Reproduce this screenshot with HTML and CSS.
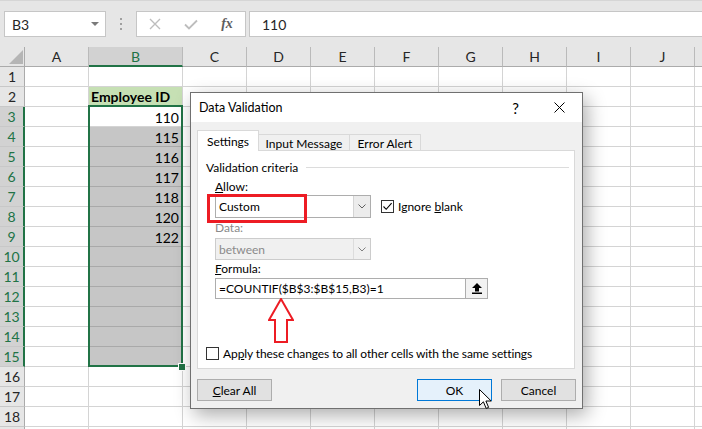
FILE: index.html
```html
<!DOCTYPE html>
<html>
<head>
<meta charset="utf-8">
<title>Data Validation</title>
<link rel="stylesheet" href="styles.css">
</head>
<body>
<div class="app">
  <div class="topbar">
    <div class="namebox"><span>B3</span><span class="nb-caret"></span></div>
    <div class="grip"><i></i><i></i><i></i></div>
    <div class="fxbox">
      <span class="fxbtn"><svg width="12" height="12" viewBox="0 0 12 12"><path d="M1 1L11 11M11 1L1 11" stroke="#bdbdbd" stroke-width="1.4" fill="none"/></svg></span>
      <span class="fxbtn"><svg width="14" height="11" viewBox="0 0 14 11"><path d="M1 5.5L5 9.5L13 1.5" stroke="#bdbdbd" stroke-width="1.8" fill="none"/></svg></span>
      <span class="fxbtn fx">fx</span>
    </div>
    <div class="formula">110</div>
  </div>

  <div class="sheet">
    <div class="row colhead">
      <div class="corner"><svg width="14" height="14" viewBox="0 0 14 14"><polygon points="14,0 14,14 0,14" fill="#b5b5b5"/></svg></div>
      <div>A</div><div class="sel">B</div><div>C</div><div>D</div><div>E</div><div>F</div><div>G</div><div>H</div><div>I</div><div>J</div><div></div>
    </div>
    <div class="row"><div class="rh">1</div><div></div><div></div><div></div><div></div><div></div><div></div><div></div><div></div><div></div><div></div><div></div></div>
    <div class="row"><div class="rh">2</div><div></div><div class="emp">Employee ID</div><div></div><div></div><div></div><div></div><div></div><div></div><div></div><div></div><div></div></div>
    <div class="row"><div class="rh sel">3</div><div></div><div class="num">110</div><div></div><div></div><div></div><div></div><div></div><div></div><div></div><div></div><div></div></div>
    <div class="row"><div class="rh sel">4</div><div></div><div class="num g">115</div><div></div><div></div><div></div><div></div><div></div><div></div><div></div><div></div><div></div></div>
    <div class="row"><div class="rh sel">5</div><div></div><div class="num g">116</div><div></div><div></div><div></div><div></div><div></div><div></div><div></div><div></div><div></div></div>
    <div class="row"><div class="rh sel">6</div><div></div><div class="num g">117</div><div></div><div></div><div></div><div></div><div></div><div></div><div></div><div></div><div></div></div>
    <div class="row"><div class="rh sel">7</div><div></div><div class="num g">118</div><div></div><div></div><div></div><div></div><div></div><div></div><div></div><div></div><div></div></div>
    <div class="row"><div class="rh sel">8</div><div></div><div class="num g">120</div><div></div><div></div><div></div><div></div><div></div><div></div><div></div><div></div><div></div></div>
    <div class="row"><div class="rh sel">9</div><div></div><div class="num g">122</div><div></div><div></div><div></div><div></div><div></div><div></div><div></div><div></div><div></div></div>
    <div class="row"><div class="rh sel">10</div><div></div><div class="g"></div><div></div><div></div><div></div><div></div><div></div><div></div><div></div><div></div><div></div></div>
    <div class="row"><div class="rh sel">11</div><div></div><div class="g"></div><div></div><div></div><div></div><div></div><div></div><div></div><div></div><div></div><div></div></div>
    <div class="row"><div class="rh sel">12</div><div></div><div class="g"></div><div></div><div></div><div></div><div></div><div></div><div></div><div></div><div></div><div></div></div>
    <div class="row"><div class="rh sel">13</div><div></div><div class="g"></div><div></div><div></div><div></div><div></div><div></div><div></div><div></div><div></div><div></div></div>
    <div class="row"><div class="rh sel">14</div><div></div><div class="g"></div><div></div><div></div><div></div><div></div><div></div><div></div><div></div><div></div><div></div></div>
    <div class="row"><div class="rh sel">15</div><div></div><div class="g"></div><div></div><div></div><div></div><div></div><div></div><div></div><div></div><div></div><div></div></div>
    <div class="row"><div class="rh">16</div><div></div><div></div><div></div><div></div><div></div><div></div><div></div><div></div><div></div><div></div><div></div></div>
    <div class="row"><div class="rh">17</div><div></div><div></div><div></div><div></div><div></div><div></div><div></div><div></div><div></div><div></div><div></div></div>
    <div class="row"><div class="rh">18</div><div></div><div></div><div></div><div></div><div></div><div></div><div></div><div></div><div></div><div></div><div></div></div>
    <div class="row"><div class="rh"></div><div></div><div></div><div></div><div></div><div></div><div></div><div></div><div></div><div></div><div></div><div></div></div>

    <div class="selection"><span class="handle"></span></div>
  </div>

  <div class="dialog">
    <div class="dlg-title">
      <span class="dlg-caption">Data Validation</span>
      <span class="dlg-help">?</span>
      <span class="dlg-close"><svg width="11" height="11" viewBox="0 0 11 11"><path d="M0.5 0.5L10.5 10.5M10.5 0.5L0.5 10.5" stroke="#000" stroke-width="1" fill="none"/></svg></span>
    </div>
    <div class="dlg-body">
      <div class="tabs">
        <div class="tab active">Settings</div>
        <div class="tab t-input">Input Message</div>
        <div class="tab t-error">Error Alert</div>
      </div>
      <div class="panel">
        <div class="legend"><span>Validation criteria</span><span class="legend-line"></span></div>
        <div class="criteria">
          <div class="lbl"><u>A</u>llow:</div>
          <div class="allow-row">
            <div class="combo">
              <span class="combo-val">Custom</span>
              <span class="combo-btn"><svg width="8" height="5" viewBox="0 0 8 5"><path d="M0.5 0.5L4 4L7.5 0.5" stroke="#606060" stroke-width="1" fill="none"/></svg></span>
            </div>
            <div class="check ignore">
              <span class="box"><svg width="11" height="11" viewBox="0 0 11 11"><path d="M1.5 5.5L4.2 8.3L9.6 2.2" stroke="#000" stroke-width="1.1" fill="none"/></svg></span>
              <span>Ignore <u>b</u>lank</span>
            </div>
          </div>
          <div class="lbl disabled data-lbl">Data:</div>
          <div class="combo disabled">
            <span class="combo-val">between</span>
            <span class="combo-btn"><svg width="8" height="5" viewBox="0 0 8 5"><path d="M0.5 0.5L4 4L7.5 0.5" stroke="#808080" stroke-width="1" fill="none"/></svg></span>
          </div>
          <div class="lbl formula-lbl"><u>F</u>ormula:</div>
          <div class="refedit">
            <span class="ref-val">=COUNTIF($B$3:$B$15,B3)=1</span>
            <span class="ref-btn"><svg width="10" height="11" viewBox="0 0 10 11"><path d="M5 0L10 5H7V8.5H3V5H0Z" fill="#000"/><rect x="0" y="9.5" width="10" height="1.5" fill="#000"/></svg></span>
          </div>
        </div>
        <div class="check apply">
          <span class="box"></span>
          <span>Ap<u>p</u>ly these changes to all other cells with the same settings</span>
        </div>
      </div>
      <div class="buttons">
        <button class="btn"><u>C</u>lear All</button>
        <div class="btn-group">
          <button class="btn default">OK</button>
          <button class="btn">Cancel</button>
        </div>
      </div>
    </div>

    <div class="callout-rect"></div>
    <svg class="callout-arrow" width="26" height="46" viewBox="0 0 26 46"><polygon points="13,1 25,22 19,22 19,44 7,44 7,22 1,22" fill="#fff" stroke="#ed1c24" stroke-width="2" stroke-linejoin="miter"/></svg>
    <svg class="cursor" width="13" height="21" viewBox="0 0 13 21"><path d="M0.5 0.5L0.5 16.5L4.4 12.8L7.2 19.4L9.6 18.4L6.9 12L12.2 12Z" fill="#fff" stroke="#000" stroke-width="1"/></svg>
  </div>
</div>
</body>
</html>
```

FILE: styles.css
```css
* { box-sizing: border-box; margin: 0; padding: 0; }
html, body { width: 702px; height: 429px; overflow: hidden; }
body { background: #fff; font-family: Lato, "Liberation Sans", sans-serif; color: #000; }
.app { position: relative; width: 702px; height: 429px; overflow: hidden; }

/* ---------- formula bar ---------- */
.topbar {
  height: 47px;
  background: #e6e6e6;
  border-top: 1px solid #d6d6d6;
  display: flex;
  align-items: flex-start;
  padding-top: 10px;
}
.namebox {
  margin-left: 4px;
  width: 102px;
  height: 26px;
  background: #fff;
  border: 1px solid #c6c6c6;
  display: flex;
  align-items: center;
  justify-content: space-between;
  padding: 0 6px 0 7px;
  font-size: 14px;
  color: #262626;
}
.nb-caret {
  width: 0; height: 0;
  border-left: 4px solid transparent;
  border-right: 4px solid transparent;
  border-top: 4px solid #7a7a7a;
}
.grip {
  width: 30px; height: 26px;
  display: flex; flex-direction: column;
  align-items: center; justify-content: center; gap: 3px;
}
.grip i { display: block; width: 2px; height: 2px; background: #a0a0a0; }
.fxbox {
  width: 110px; height: 26px;
  background: #fff;
  border: 1px solid #c6c6c6;
  display: flex; align-items: center;
}
.fxbtn { width: 36px; display: flex; justify-content: center; align-items: center; }
.fx {
  font-family: "Liberation Serif", serif;
  font-style: italic; font-weight: bold;
  font-size: 14px; color: #5e5e5e;
}
.formula {
  flex: 1;
  margin-left: 3px;
  height: 26px;
  background: #fff;
  border: 1px solid #c6c6c6;
  border-right: none;
  padding-left: 12px;
  font-size: 14px;
  display: flex; align-items: center;
  color: #262626;
}

/* ---------- grid ---------- */
.sheet { position: relative; }
.row {
  display: grid;
  grid-template-columns: 25px 64px 94px repeat(9, 64px);
  height: 20px;
}
.row > div {
  border-right: 1px solid #d4d4d4;
  border-bottom: 1px solid #d4d4d4;
  font-size: 14px;
  line-height: 19px;
  overflow: hidden;
  white-space: nowrap;
}
.colhead { background: #e6e6e6; }
.colhead > div {
  border-right-color: #bababa;
  border-bottom-color: #ababab;
  text-align: center;
  color: #262626;
}
.colhead > div.sel {
  background: #d2d2d2;
  color: #217346;
  border-bottom: 2px solid #217346;
}
.colhead > div.corner {
  display: flex; align-items: flex-end; justify-content: flex-end;
  padding: 0 1px 2px 0;
  border-right-color: #ababab;
}
.row > div.rh {
  background: #e6e6e6;
  text-align: center;
  color: #262626;
  border-right-color: #ababab;
  border-bottom-color: #c8c8c8;
}
.row > div.rh.sel {
  background: #d2d2d2;
  color: #217346;
  border-right: 2px solid #217346;
}
.row > div.num { text-align: right; padding-right: 3px; line-height: 22px; }
.row > div.g { background: #c6c6c6; border-bottom-color: #a9a9a9; }
.row > div.emp {
  background: #c6e0b4;
  font-weight: bold;
  padding-left: 2px;
  line-height: 19px;
}
.selection {
  position: absolute;
  left: 88px; top: 58px;
  width: 95px; height: 262px;
  border: 2px solid #217346;
}
.handle {
  position: absolute;
  left: 88px; top: 256px;
  width: 8px; height: 8px;
  background: #217346;
  border: 1px solid #fff;
}

/* ---------- dialog ---------- */
.dialog {
  position: absolute;
  z-index: 5;
  left: 190px; top: 92px;
  width: 393px; height: 317px;
  border: 1px solid #707070;
  background: #f0f0f0;
  box-shadow: 4px 6px 18px rgba(0, 0, 0, 0.33);
  font-family: Lato, "Liberation Sans", sans-serif;
  font-size: 12px;
  color: #000;
  display: flex; flex-direction: column;
}
.dlg-title {
  height: 29px;
  background: #fff;
  display: flex; align-items: center;
  padding-left: 8px;
}
.dlg-caption { flex: 1; font-size: 12.5px; }
.dlg-help { font-size: 15px; margin-right: 35px; }
.dlg-close { display: flex; margin-right: 17px; }

.dlg-body {
  flex: 1;
  padding: 8px 6px 0 6px;
  display: flex; flex-direction: column;
}
.tabs { display: flex; align-items: flex-end; height: 20px; }
.tab {
  position: relative;
  height: 16px;
  border: 1px solid #d9d9d9;
  border-bottom: none;
  background: #f0f0f0;
  display: flex; align-items: center; justify-content: center;
  padding-top: 1px;
}
.tab.active {
  z-index: 2;
  align-self: flex-start;
  height: 21px;
  width: 62px;
  background: #fff;
  padding-top: 0;
}
.tab.t-input { width: 91px; border-left: none; }
.tab.t-error { width: 71px; border-left: none; }

.panel {
  position: relative;
  z-index: 1;
  width: 378px; height: 219px;
  background: #fff;
  border: 1px solid #d9d9d9;
  padding: 8px 5px 7px 8px;
  display: flex; flex-direction: column;
}
.legend { display: flex; align-items: center; height: 16px; }
.legend-line { flex: 1; height: 1px; background: #dcdcdc; margin-left: 8px; }
.criteria { margin-top: 4px; padding-left: 9px; display: flex; flex-direction: column; align-items: flex-start; }
.lbl { height: 16px; line-height: 16px; }
.lbl.disabled { color: #8a8a8a; }
.data-lbl { margin-top: 2px; }
.formula-lbl { margin-top: 1px; }

.allow-row { display: flex; align-items: center; }
.combo {
  width: 156px; height: 23px;
  border: 1px solid #adadad;
  background: #fff;
  display: flex; align-items: stretch;
}
.combo-val { flex: 1; padding-left: 3px; display: flex; align-items: center; }
.combo-btn {
  width: 17px;
  border-left: 1px solid #d4d4d4;
  background: #ececec;
  display: flex; align-items: center; justify-content: center;
}
.combo.disabled {
  margin-top: 2px;
  height: 22px;
  background: #f0f0f0;
  border-color: #cccccc;
  color: #8a8a8a;
}
.combo.disabled .combo-btn { background: #f0f0f0; border-left-color: #dcdcdc; }

.check { display: flex; align-items: center; }
.box {
  width: 13px; height: 13px;
  border: 1px solid #333;
  background: #fff;
  display: flex; align-items: center; justify-content: center;
}
.ignore { margin-left: 10px; gap: 4px; }
.apply { margin-top: auto; height: 16px; gap: 4px; letter-spacing: -0.1px; }

.refedit {
  margin-top: 1px;
  width: 273px; height: 21px;
  border: 1px solid #adadad;
  background: #fff;
  display: flex; align-items: stretch;
}
.ref-val { flex: 1; padding-left: 3px; display: flex; align-items: center; }
.ref-btn {
  width: 22px;
  border-left: 1px solid #adadad;
  background: #f2f2f2;
  display: flex; align-items: center; justify-content: center;
}

.buttons {
  margin-top: 10px;
  display: flex; justify-content: space-between;
}
.btn-group { display: flex; gap: 9px; }
.btn {
  width: 75px; height: 22px;
  border: 1px solid #adadad;
  background: #e1e1e1;
  font-family: inherit; font-size: 12px; color: #000;
}
.btn.default { border-color: #0078d7; background: #e5f1fb; }

.callout-rect {
  position: absolute;
  z-index: 3;
  left: 16px; top: 101px;
  width: 100px; height: 29px;
  border: 3px solid #ed1c24;
}
.callout-arrow { position: absolute; z-index: 3; left: 77px; top: 205px; }
.cursor { position: absolute; z-index: 4; left: 288px; top: 296px; }
```
